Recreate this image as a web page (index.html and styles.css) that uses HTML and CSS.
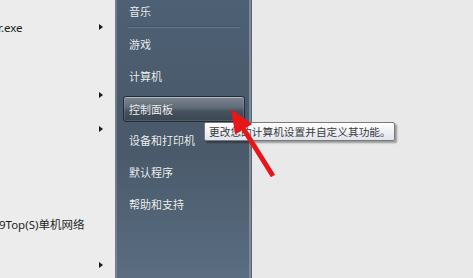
FILE: index.html
```html
<!DOCTYPE html>
<html lang="zh">
<head>
<meta charset="utf-8">
<link rel="stylesheet" href="styles.css">
</head>
<body>
<div class="screen">
  <div class="programs">
    <div class="prog"><span class="label cut">r.exe</span><span class="caret"></span></div>
    <div class="prog"></div>
    <div class="prog"><span class="label"></span><span class="caret"></span></div>
    <div class="prog"><span class="label"></span><span class="caret"></span></div>
    <div class="prog-gap"></div>
    <div class="prog"><span class="label cut-small">9Top(S)单机网络</span></div>
    <div class="prog last"><span class="label"></span><span class="caret"></span></div>
  </div>
  <div class="panel">
    <div class="item first">音乐</div>
    <div class="sep"></div>
    <div class="item">游戏</div>
    <div class="item">计算机</div>
    <div class="item-wrap"><div class="item active">控制面板</div></div>
    <div class="item">设备和打印机</div>
    <div class="item">默认程序</div>
    <div class="item">帮助和支持</div>
  </div>
  <div class="desk"></div>
  <div class="tooltip">更改您的计算机设置并自定义其功能。</div>
  <svg class="arrow" width="473" height="278" viewBox="0 0 473 278">
    <polygon fill="#e8161a" points="231,109 252.2,124 245.8,128 275.1,174.7 270.9,177.3 241.6,130.6 235.2,134.6"/>
  </svg>
</div>
</body>
</html>
```
FILE: styles.css
```css
html, body {
  margin: 0;
  padding: 0;
}
body {
  width: 473px;
  height: 278px;
  overflow: hidden;
  background: #e9e9e9;
  font-family: "Noto Sans", "Noto Sans CJK SC", sans-serif;
}
.screen {
  position: relative;
  display: flex;
  width: 473px;
  height: 278px;
  overflow: hidden;
}
.programs {
  width: 115px;
  flex: none;
  background: #ececec;
  padding-top: 10px;
  box-sizing: border-box;
  display: flex;
  flex-direction: column;
}
.prog {
  height: 34px;
  display: flex;
  align-items: center;
  justify-content: space-between;
  padding-right: 12px;
  flex: none;
}
.prog-gap {
  height: 61px;
  flex: none;
}
.prog.last {
  margin-top: 7px;
}
.label {
  font-size: 11.5px;
  color: #1e1e1e;
  white-space: nowrap;
  font-family: "Noto Sans", "Noto Sans CJK SC", sans-serif;
}
.cut {
  margin-left: -2px;
}
.cut-small {
  margin-left: -1px;
  font-size: 11.5px;
}
.caret {
  width: 0;
  height: 0;
  border-left: 4px solid #1a1a1a;
  border-top: 3.5px solid transparent;
  border-bottom: 3.5px solid transparent;
}
.panel {
  width: 137px;
  flex: none;
  box-sizing: border-box;
  border-left: 1px solid #737c84;
  border-right: 1px solid #59636d;
  box-shadow: inset 1px 0 rgba(255,255,255,0.18), inset -2px 0 #7d8a97;
  background: linear-gradient(180deg, #4e6074 0%, #495a6c 40%, #4a5a6b 55%, #5a6d81 100%);
  display: flex;
  flex-direction: column;
}
.item {
  height: 32px;
  display: flex;
  align-items: center;
  padding-left: 13px;
  font-family: "Noto Sans CJK SC", sans-serif;
  font-size: 11px;
  color: #eef1f4;
  flex: none;
  text-shadow: 0 0 1px rgba(0,0,0,0.3);
}
.item.first {
  height: 22px;
}
.sep {
  height: 1px;
  margin: 5px 11px 0 12px;
  background: #66778a;
  box-shadow: 0 -1px 0 rgba(0,0,0,0.12);
  flex: none;
}
.item-wrap {
  height: 32px;
  flex: none;
  padding-top: 4px;
  box-sizing: border-box;
}
.item.active {
  height: 26px;
  width: 122px;
  margin-left: 7px;
  padding-left: 5px;
  box-sizing: border-box;
  border: 1px solid #232c36;
  border-radius: 3px;
  background: linear-gradient(180deg, #7a8591 0%, #5f6a77 45%, #46515e 60%, #3b4653 100%);
  box-shadow: inset 0 1px 0 rgba(255,255,255,0.35), inset 0 0 0 1px rgba(255,255,255,0.12);
}
.desk {
  flex: 1;
  background: #e9e9e9;
}
.tooltip {
  position: absolute;
  left: 204px;
  top: 122px;
  width: 191px;
  height: 19px;
  box-sizing: border-box;
  border: 1px solid #7a7a7a;
  border-radius: 2px;
  background: linear-gradient(180deg, #ffffff 0%, #eceef5 60%, #e1e3ee 100%);
  box-shadow: 2px 2px 2px rgba(0,0,0,0.35);
  font-family: "Noto Sans CJK SC", sans-serif;
  font-size: 10.7px;
  color: #3a3a3a;
  padding-left: 4px;
  line-height: 17px;
  white-space: nowrap;
  overflow: hidden;
}
.arrow {
  position: absolute;
  left: 0;
  top: 0;
  pointer-events: none;
}
```
